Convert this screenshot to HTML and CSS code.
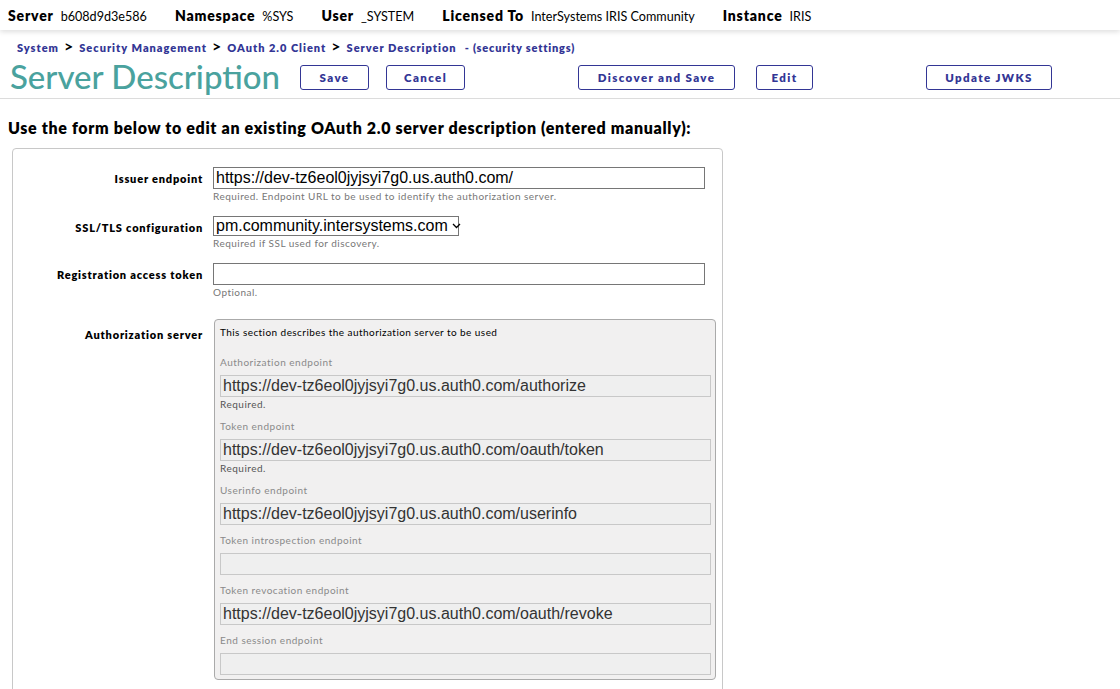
FILE: index.html
```html
<!DOCTYPE html>
<html>
<head>
<meta charset="utf-8">
<link rel="stylesheet" href="styles.css">
</head>
<body>
<div class="topbar">
  <span class="tb-item"><b>Server</b><span>b608d9d3e586</span></span>
  <span class="tb-item"><b>Namespace</b><span>%SYS</span></span>
  <span class="tb-item"><b>User</b><span>_SYSTEM</span></span>
  <span class="tb-item"><b>Licensed To</b><span>InterSystems IRIS Community</span></span>
  <span class="tb-item"><b>Instance</b><span>IRIS</span></span>
</div>
<div class="header">
  <div class="crumbs">
    <a class="crumb">System</a><span class="sep">&gt;</span>
    <a class="crumb">Security Management</a><span class="sep">&gt;</span>
    <a class="crumb">OAuth 2.0 Client</a><span class="sep">&gt;</span>
    <a class="crumb">Server Description</a>
    <span class="crumb extra">- (security settings)</span>
  </div>
  <div class="titlerow">
    <h1 class="title">Server Description</h1>
    <button class="btn btn-save">Save</button>
    <button class="btn btn-cancel">Cancel</button>
    <button class="btn btn-discover">Discover and Save</button>
    <button class="btn btn-edit">Edit</button>
    <button class="btn btn-jwks">Update JWKS</button>
  </div>
</div>
<h2 class="intro">Use the form below to edit an existing OAuth 2.0 server description (entered manually):</h2>
<div class="card">
  <div class="row">
    <label class="lbl">Issuer endpoint</label>
    <div class="field">
      <input class="inp wide" type="text" value="https://dev-tz6eol0jyjsyi7g0.us.auth0.com/">
      <div class="hint">Required. Endpoint URL to be used to identify the authorization server.</div>
    </div>
  </div>
  <div class="row">
    <label class="lbl">SSL/TLS configuration</label>
    <div class="field">
      <div class="select">pm.community.intersystems.com<svg class="chev" width="9" height="6" viewBox="0 0 9 6"><path d="M1 1 L4.5 4.5 L8 1" fill="none" stroke="#000" stroke-width="1.3"/></svg></div>
      <div class="hint">Required if SSL used for discovery.</div>
    </div>
  </div>
  <div class="row">
    <label class="lbl">Registration access token</label>
    <div class="field">
      <input class="inp wide" type="text" value="">
      <div class="hint">Optional.</div>
    </div>
  </div>
  <div class="row row-auth">
    <label class="lbl">Authorization server</label>
    <div class="field">
      <div class="authbox">
        <div class="desc">This section describes the authorization server to be used</div>
        <div class="sub first">Authorization endpoint</div>
        <input class="dis" type="text" disabled value="https://dev-tz6eol0jyjsyi7g0.us.auth0.com/authorize">
        <div class="req">Required.</div>
        <div class="sub after-req">Token endpoint</div>
        <input class="dis" type="text" disabled value="https://dev-tz6eol0jyjsyi7g0.us.auth0.com/oauth/token">
        <div class="req">Required.</div>
        <div class="sub after-req">Userinfo endpoint</div>
        <input class="dis" type="text" disabled value="https://dev-tz6eol0jyjsyi7g0.us.auth0.com/userinfo">
        <div class="sub">Token introspection endpoint</div>
        <input class="dis" type="text" disabled value="">
        <div class="sub">Token revocation endpoint</div>
        <input class="dis" type="text" disabled value="https://dev-tz6eol0jyjsyi7g0.us.auth0.com/oauth/revoke">
        <div class="sub">End session endpoint</div>
        <input class="dis" type="text" disabled value="">
      </div>
    </div>
  </div>
</div>
</body>
</html>
```
FILE: styles.css
```css
html, body {
  margin: 0;
  padding: 0;
  background: #fff;
  font-family: "Lato", "DejaVu Sans", sans-serif;
  color: #000;
  overflow: hidden;
}
.topbar {
  height: 30px;
  display: flex;
  align-items: center;
  gap: 28px;
  padding-left: 8px;
  font-size: 12.6px;
  background: #fff;
  box-shadow: 0 2px 5px rgba(0,0,0,0.13);
  position: relative;
  z-index: 1;
}
.tb-item { display: flex; align-items: baseline; gap: 7px; }
.tb-item b { font-weight: 800; font-size: 14px; letter-spacing: 0.8px; }
.header {
  border-bottom: 1px solid #dcdcdc;
  height: 68px;
}
.crumbs {
  display: flex;
  align-items: baseline;
  padding: 6px 0 0 17px;
  height: 18px;
  font-size: 11px;
  font-weight: 800;
  letter-spacing: 1px;
  color: #333695;
}
.crumb { color: #333695; }
.sep {
  color: #000;
  font-size: 16px;
  font-weight: 700;
  margin: 0 6px 0 5px;
  letter-spacing: 0;
}
.extra { margin-left: 8px; letter-spacing: 0.8px; }
.titlerow {
  display: flex;
  align-items: center;
  height: 44px;
}
.title {
  margin: 0 0 0 10px;
  font-size: 33px;
  font-weight: 500;
  color: #4aa29e;
  width: 290px;
  letter-spacing: 0;
}
.btn {
  height: 25px;
  border: 1px solid #333695;
  border-radius: 3px;
  background: #fff;
  color: #333695;
  font-family: "Lato", sans-serif;
  font-size: 11.5px;
  font-weight: 800;
  letter-spacing: 1.4px;
  padding: 0;
  margin-top: 2px;
}
.btn-save { width: 69px; }
.btn-cancel { width: 79px; margin-left: 17px; }
.btn-discover { width: 157px; margin-left: 113px; }
.btn-edit { width: 57px; margin-left: 21px; }
.btn-jwks { width: 126px; margin-left: 113px; }
.intro {
  margin: 19px 0 0 8px;
  font-size: 16px;
  line-height: 20px;
  font-weight: 800;
  letter-spacing: 0.66px;
}
.card {
  margin: 10px 0 0 12px;
  width: 709px;
  border: 1px solid #c8c8c8;
  border-radius: 4px;
  padding-top: 18px;
  height: 600px;
}
.row {
  display: grid;
  grid-template-columns: 190px 1fr;
  column-gap: 10px;
  margin-bottom: 13px;
}
.lbl {
  text-align: right;
  font-size: 11px;
  font-weight: 800;
  letter-spacing: 0.8px;
  padding-top: 5px;
}
.inp {
  box-sizing: border-box;
  height: 22px;
  border: 1px solid #767676;
  border-radius: 0;
  font-family: "Liberation Sans", Arial, sans-serif;
  font-size: 16px;
  padding: 0 2px;
  color: #000;
  display: block;
  margin: 0;
}
.wide { width: 492px; }
.hint {
  font-size: 10px;
  line-height: 14px;
  color: #777;
  letter-spacing: 0.47px;
}
.select {
  box-sizing: border-box;
  width: 246px;
  height: 20px;
  border: 1px solid #767676;
  font-family: "Liberation Sans", Arial, sans-serif;
  font-size: 16px;
  padding: 0 0 0 2px;
  display: flex;
  align-items: center;
  gap: 4px;
  line-height: 18px;
}
.chev { flex: none; }
.row-auth { margin-top: 20px; }
.row-auth .lbl { padding-top: 9px; }
.authbox {
  box-sizing: border-box;
  width: 502px;
  margin-left: 1px;
  background: #f1f0f0;
  border: 1px solid #aaa;
  border-radius: 4px;
  padding: 5px 5px 4px 5px;
}
.desc {
  font-size: 10px;
  line-height: 14px;
  color: #000;
  letter-spacing: 0.44px;
}
.sub {
  font-size: 10px;
  line-height: 14px;
  color: #8a8a8a;
  letter-spacing: 0.5px;
  margin-top: 8px;
  margin-bottom: 6px;
}
.sub.first { margin-top: 16px; }
.sub.after-req { margin-top: 8px; }
.dis {
  display: block;
  box-sizing: border-box;
  width: 491px;
  height: 22px;
  margin: 0;
  border: 1px solid #c8c8c8;
  background: #efefef;
  font-family: "Liberation Sans", Arial, sans-serif;
  font-size: 16px;
  color: #333;
  padding: 0 2px;
}
.req {
  font-size: 10px;
  line-height: 14px;
  margin-top: 0;
  color: #555;
  letter-spacing: 0.5px;
}
```
